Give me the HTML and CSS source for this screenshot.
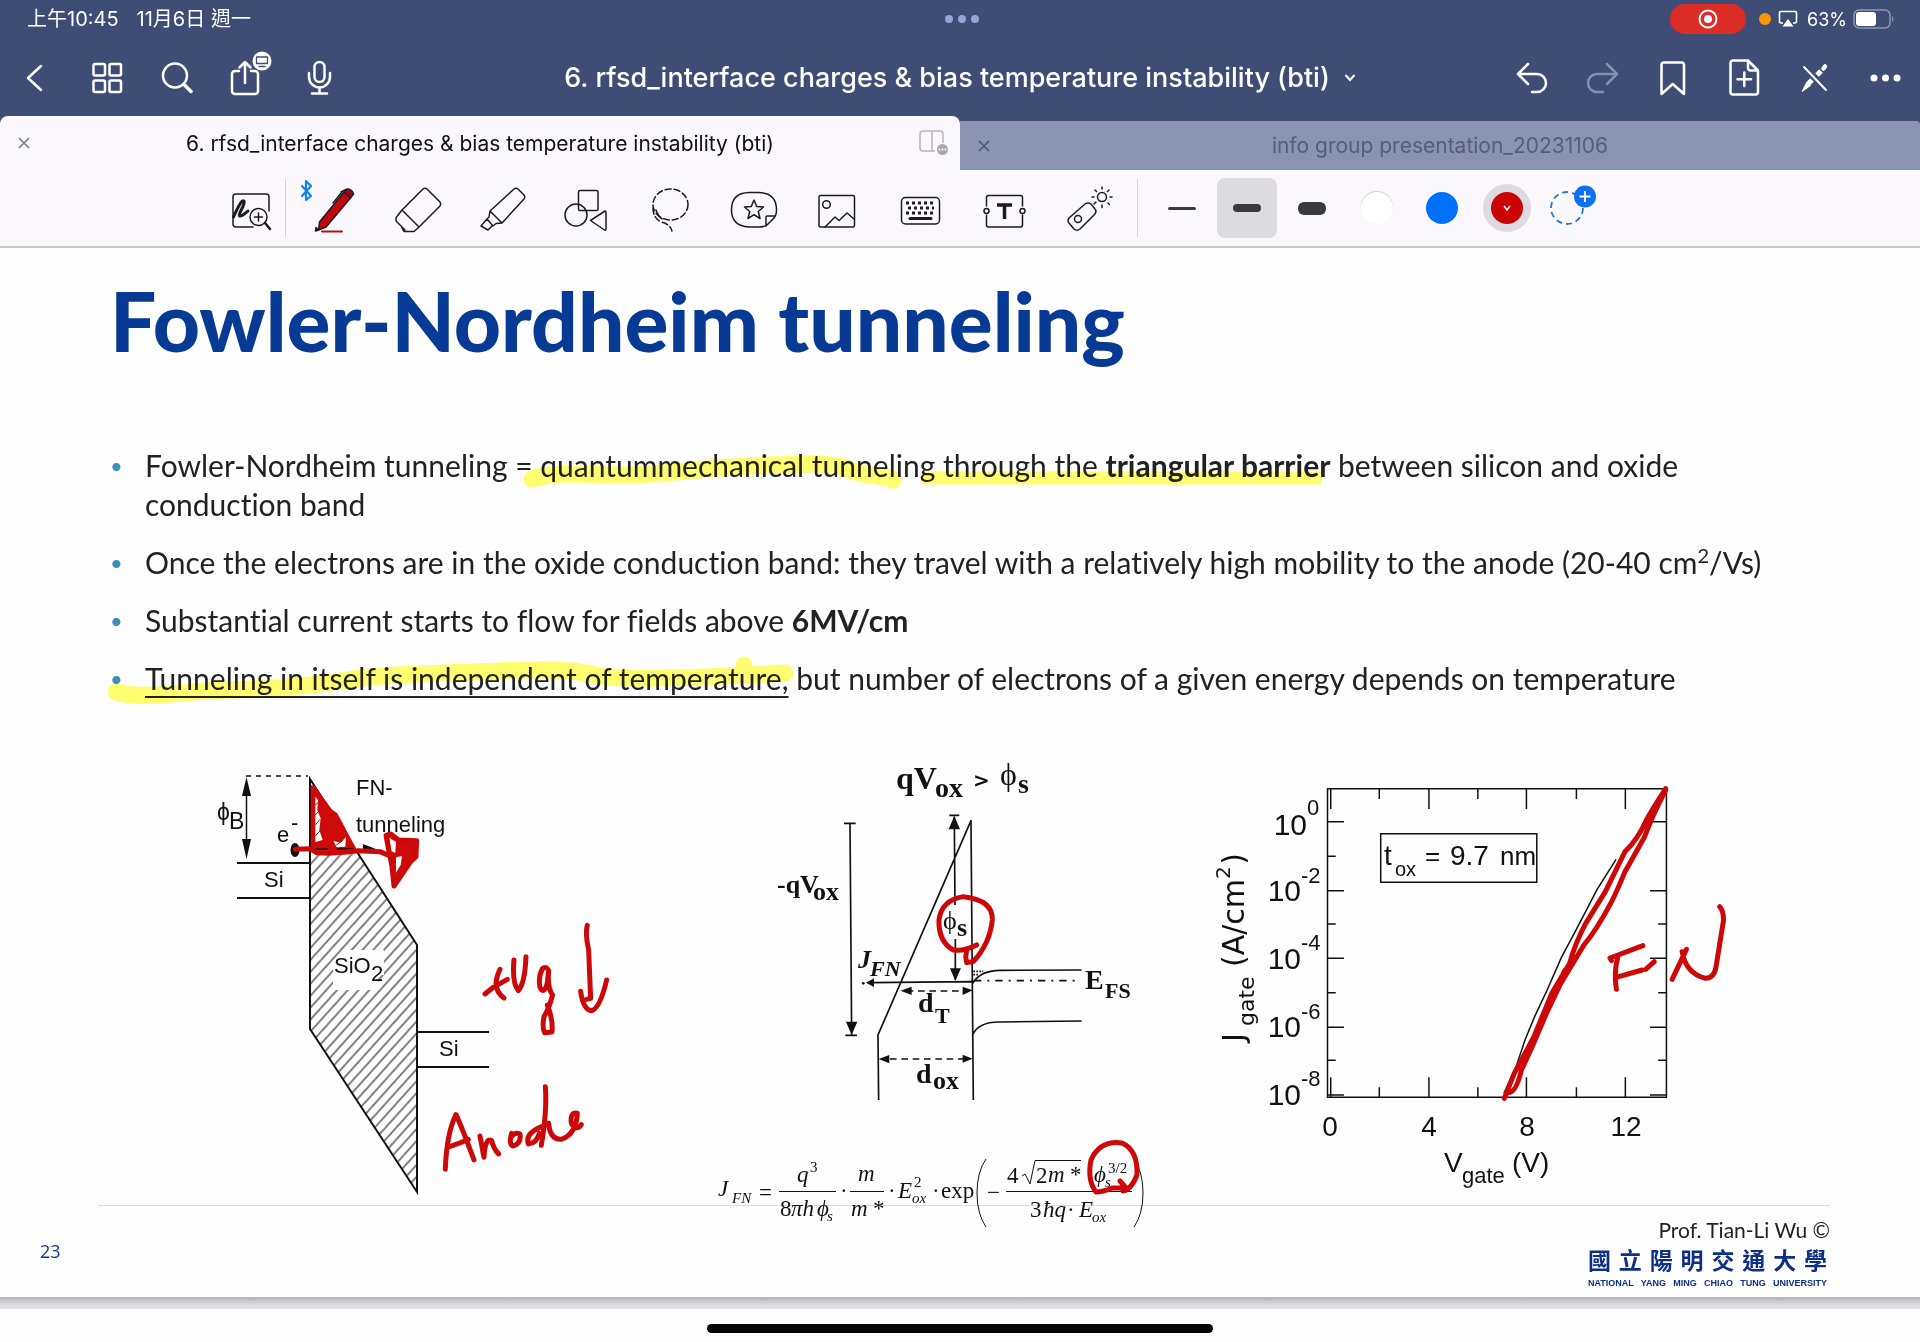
FILE: index.html
```html
<!DOCTYPE html>
<html lang="zh-Hant">
<head>
<meta charset="utf-8">
<meta name="viewport" content="width=device-width, initial-scale=1">
<title>6. rfsd_interface charges &amp; bias temperature instability (bti)</title>
<link rel="stylesheet" href="styles.css">
</head>
<body>
<header class="app-header">
  <div class="status">
    <div class="status-left"><span>上午10:45</span><span>11月6日 週一</span></div>
    <svg class="status-dots" width="36" height="10" viewBox="0 0 36 10"><circle cx="5" cy="5" r="4"/><circle cx="18" cy="5" r="4"/><circle cx="31" cy="5" r="4"/></svg>
    <div class="status-right">
      <span class="rec"><svg width="20" height="20" viewBox="0 0 20 20"><circle cx="10" cy="10" r="8.5" fill="none" stroke="#fff" stroke-width="2"/><circle cx="10" cy="10" r="4" fill="#fff"/></svg></span>
      <span class="cam"></span>
      <svg width="20" height="18" viewBox="0 0 20 18"><path d="M5 13H3a1.5 1.5 0 0 1-1.500-1.500V3A1.500 1.500 0 0 1 3 1.500H17A1.500 1.500 0 0 1 18.500 3V11.500A1.500 1.500 0 0 1 17 13H15" fill="none" stroke="#fff" stroke-width="1.600"/><path d="M10 9L15.500 16.500H4.500Z" fill="#fff"/></svg>
      <span class="pct">63%</span>
      <svg width="43" height="20" viewBox="0 0 43 20"><rect x="1" y="1" width="36" height="18" rx="5" fill="none" stroke="#8f98b6" stroke-width="1.500"/><rect x="3" y="3" width="20" height="14" rx="3" fill="#fff"/><path d="M39 7a4 4 0 0 1 0 6z" fill="#8f98b6"/></svg>
    </div>
  </div>
  <nav class="nav">
    <div class="nav-group">
      <button class="nav-btn" aria-label="Back"><svg viewBox="0 0 44 44"><path d="M27 11L14 23L27 35"/></svg></button>
      <button class="nav-btn" aria-label="Thumbnails"><svg viewBox="0 0 44 44"><rect x="8.500" y="9" width="11.500" height="11.500" rx="1.500"/><rect x="24.500" y="9" width="11.500" height="11.500" rx="1.500"/><rect x="8.500" y="25.500" width="11.500" height="11.500" rx="1.500"/><rect x="24.500" y="25.500" width="11.500" height="11.500" rx="1.500"/></svg></button>
      <button class="nav-btn" aria-label="Search"><svg viewBox="0 0 44 44"><circle cx="19" cy="20.500" r="12"/><path d="M28 29.500L35 36.500" stroke-width="3.500"/></svg></button>
      <button class="nav-btn" aria-label="Share"><svg viewBox="0 0 44 44"><path d="M12 16H8a3 3 0 0 0-3 3V36a3 3 0 0 0 3 3H28a3 3 0 0 0 3-3V19a3 3 0 0 0-3-3H24M18 28V7M12.500 12.500L18 7L23.500 12.500"/><circle cx="35" cy="6" r="9.500" fill="#fff" stroke="none"/><path d="M29.500 2H40.500V8.500H29.500ZM32 11.500H38" stroke="#3f4d76" stroke-width="1.300"/></svg></button>
      <button class="nav-btn" aria-label="Record"><svg viewBox="0 0 44 44"><rect x="16.500" y="7" width="10" height="20" rx="5"/><path d="M11 18V22a10.500 10.500 0 0 0 21 0V18M21.500 32.500V38M14 38.500H29"/></svg></button>
    </div>
    <h1 class="doc-title"><button>6. rfsd_interface charges &amp; bias temperature instability (bti)<svg width="12" height="10" viewBox="0 0 12 10"><path d="M1.500 2L6 7L10.500 2"/></svg></button></h1>
    <div class="nav-group nav-end">
      <button class="nav-btn" aria-label="Undo"><svg viewBox="0 0 44 44"><path d="M20 9L10 19L20 29M11 19H29a9 9 0 0 1 0 18H24"/></svg></button>
      <button class="nav-btn dim" aria-label="Redo"><svg viewBox="0 0 44 44"><path d="M28 9L38 19L28 29M37 19H18a9 9 0 0 0 0 18H24"/></svg></button>
      <button class="nav-btn" aria-label="Bookmark"><svg viewBox="0 0 44 44"><path d="M11.500 39V10a2.500 2.500 0 0 1 2.500-2.500H31.500A2.500 2.500 0 0 1 34 10V39L22.750 29Z"/></svg></button>
      <button class="nav-btn" aria-label="Add page"><svg viewBox="0 0 44 44"><path d="M27 5.500H12a2.500 2.500 0 0 0-2.500 2.500V37A2.500 2.500 0 0 0 12 39.500H34.500A2.500 2.500 0 0 0 37 37V15.500L27 5.500V13a2.500 2.500 0 0 0 2.500 2.500H37M23.300 17.500V31M16.500 24.200H30"/></svg></button>
      <button class="nav-btn" aria-label="Read only"><svg viewBox="0 0 44 44"><path d="M12 12L34 35" stroke-width="2"/><path d="M10.500 36L15 27.500L18 30.500Z" stroke-width="1.500" fill="#fff"/><path d="M16 29L20 25M25 20L29 16" stroke-width="5" stroke-linecap="butt"/><path d="M31.500 13.500L33 11.500" stroke-width="4.500"/></svg></button>
      <button class="nav-btn" aria-label="More"><svg viewBox="0 0 44 44"><g fill="#fff" stroke="none"><circle cx="11" cy="23" r="3.500"/><circle cx="22.500" cy="23" r="3.500"/><circle cx="34" cy="23" r="3.500"/></g></svg></button>
    </div>
  </nav>
  <div class="tabs">
    <div class="tab tab-active">
      <button class="close" aria-label="Close tab"><svg width="12" height="12" viewBox="0 0 12 12"><path d="M1 1L11 11M11 1L1 11"/></svg></button>
      <a href="#slide">6. rfsd_interface charges &amp; bias temperature instability (bti)</a>
      <button class="split" aria-label="Split view"><svg width="30" height="26" viewBox="0 0 30 26"><path d="M24 13V4a3 3 0 0 0-3-3H4a3 3 0 0 0-3 3V18a3 3 0 0 0 3 3H16M13 1V21" fill="none" stroke="#b5b4b9" stroke-width="1.500"/><circle cx="23.500" cy="19.500" r="5.500" fill="#a9a8ad"/><g fill="#fff"><circle cx="20.500" cy="19.500" r="1"/><circle cx="23.500" cy="19.500" r="1"/><circle cx="26.500" cy="19.500" r="1"/></g></svg></button>
    </div>
    <div class="tab tab-idle">
      <button class="close" aria-label="Close tab"><svg width="12" height="12" viewBox="0 0 12 12"><path d="M1 1L11 11M11 1L1 11"/></svg></button>
      <a href="#info">info group presentation_20231106</a>
      <span class="split"></span>
    </div>
  </div>
</header>

<div class="toolbar">
  <button class="tool tool-zoom" aria-label="Zoom window"><svg viewBox="0 0 48 48"><path d="M42 27V13a3 3 0 0 0-3-3H9a3 3 0 0 0-3 3V40a3 3 0 0 0 3 3H26"/><path d="M6.500 33C11 23 15 15 17 17C19 20 10 31 13 32C16 32 18 29 21 27" stroke-width="3"/><circle cx="31.500" cy="33" r="8.500"/><path d="M38 39L43 45" stroke-width="2.500"/><path d="M27.500 33H35.500M31.500 29V37"/></svg></button>
  <span class="sep"></span>
  <div class="tools">
    <button class="tool" aria-label="Pen"><svg viewBox="0 0 48 48"><path d="M-9 2L0 12L-5 16V-3L0 2L-9 12" stroke="#1583e6" stroke-width="2.200"/><path d="M33 8L39.500 14L15 43L7.500 46L8.500 38Z" fill="#c4060c"/><path d="M33 8L36 5Q41 5 42.500 10L39.500 14Z" fill="#a3060b"/><path d="M31 8L22 19M35 5.500L30 8"/><path d="M4.500 47L7.500 46L5 43.500Z" fill="#1c1c1e"/><path d="M11 47.500H31" stroke="#b5120f" stroke-width="2"/></svg></button>
    <button class="tool" aria-label="Eraser"><svg viewBox="0 0 48 48"><path d="M29 5Q31 3.500 33 5L46 18Q47.500 20 46 22L25 43L8 26ZM8 26L2.500 33Q1 36 3 38L11 46M25 43L20 47.500H10L8 44"/></svg></button>
    <button class="tool" aria-label="Highlighter"><svg viewBox="0 0 48 48"><path d="M12 27L36 5Q38 3.500 40 5L46 11Q47.500 13 46 15L24 39ZM12 27L11 33L9 35L15 42L18 39.500L24 39M9 35L3 42L10 46L14 42"/></svg></button>
    <button class="tool" aria-label="Shapes"><svg viewBox="0 0 48 48"><rect x="16.500" y="6.500" width="19.500" height="20" rx="1.500"/><circle cx="14" cy="31" r="11"/><path d="M28.500 36.500L43 27Q44 27 44 28.500V45.500Q44 46.500 42.500 46Z"/></svg></button>
    <button class="tool" aria-label="Lasso"><svg viewBox="0 0 48 48"><ellipse cx="25.500" cy="20.500" rx="17.500" ry="15.500" stroke-dasharray="6 3"/><path d="M8 24Q8 34 16 38Q25 40 27 47" stroke-dasharray="6 3"/><path d="M11 26Q13 32 17 35"/></svg></button>
    <button class="tool" aria-label="Stickers"><svg viewBox="0 0 48 48"><path d="M20 8.500H30Q47.500 9 47.500 26Q47.500 32 44 35L38 41Q35 43 30 43H20Q2.500 42 2.500 26Q2.500 9 20 8.500ZM37 42V33Q37 32 38 32H46"/><path d="M25 16L27.700 22.500L34.500 23L29.300 27.500L31 34.500L25 30.700L19 34.500L20.700 27.500L15.500 23L22.300 22.500Z"/></svg></button>
    <button class="tool" aria-label="Image"><svg viewBox="0 0 48 48"><rect x="7" y="11.500" width="35.500" height="31.500" rx="1.500"/><circle cx="14.500" cy="20.500" r="3.800"/><path d="M13 43L23 33L27 36.500L35 29L42 35"/></svg></button>
    <button class="tool" aria-label="Keyboard"><svg viewBox="0 0 48 48"><rect x="5.500" y="13.500" width="38" height="26.500" rx="4"/><path d="M10 19H40M12 24H38M10 29H40" stroke-width="3" stroke-dasharray="3 3" stroke-linecap="butt"/><path d="M14 34.500H35" stroke-width="3"/></svg></button>
    <button class="tool" aria-label="Text"><svg viewBox="0 0 48 48"><path d="M6.500 22V13.500Q6.500 11.500 8.500 11.500H40.500Q42.500 11.500 42.500 13.500V22M6.500 31V41Q6.500 43 8.500 43H40.500Q42.500 43 42.500 41V31"/><circle cx="6.500" cy="27" r="2.500"/><circle cx="42.500" cy="27" r="2.500"/><path d="M17 21H32M24.500 21V35" stroke-width="3.500" stroke-linecap="butt"/></svg></button>
    <button class="tool" aria-label="Laser pointer"><svg viewBox="0 0 48 48"><path d="M22 20Q25 18 28 20L32 25Q34 27 32 30L17 45Q14 47.500 11 45L6 39Q4 37 6 34Z"/><circle cx="15" cy="35" r="3.500"/><circle cx="39" cy="13" r="4.500"/><path d="M39 3V5M39 21V23.500M29 13H31M47 13H49M32 6L33.500 7.500M45 19L46.500 20.500M46 6L44.500 7.500M33 18L31 20"/></svg></button>
  </div>
  <span class="sep"></span>
  <div class="styles">
    <button class="pick" aria-label="Thin stroke"><span class="dash dash-s"></span></button>
    <button class="pick pick-on" aria-label="Medium stroke"><span class="dash dash-m"></span></button>
    <button class="pick" aria-label="Thick stroke"><span class="dash dash-l"></span></button>
    <button class="pick" aria-label="White"><span class="ink ink-white"></span></button>
    <button class="pick" aria-label="Blue"><span class="ink ink-blue"></span></button>
    <button class="pick" aria-label="Red"><span class="ink ink-red"><svg width="10" height="8" viewBox="0 0 10 8"><path d="M2 2L5 6L8 2" fill="none" stroke="#fff" stroke-width="1.600"/></svg></span></button>
    <button class="pick" aria-label="Add colour"><svg width="60" height="60" viewBox="0 0 60 60"><circle cx="25" cy="30" r="16" fill="none" stroke="#2478d8" stroke-width="1.800" stroke-dasharray="6 4"/><circle cx="43" cy="18.500" r="11" fill="#0d6ff2"/><path d="M43 13V24M37.500 18.500H48.500" stroke="#fff" stroke-width="1.800"/></svg></button>
  </div>
</div>

<main class="slide" id="slide">
  <h2 class="slide-title">Fowler-Nordheim tunneling</h2>
  <div class="points">
    <ul>
      <li><p>Fowler-Nordheim tunneling = quantummechanical tunneling through the <b>triangular barrier</b> between silicon and oxide conduction band</p></li>
      <li><p>Once the electrons are in the oxide conduction band: they travel with a relatively high mobility to the anode (20-40 cm<sup>2</sup>/Vs)</p></li>
      <li><p>Substantial current starts to flow for fields above <b>6MV/cm</b></p></li>
      <li><p><u>Tunneling in itself is independent of temperature,</u> but number of electrons of a given energy depends on temperature</p></li>
    </ul>
    <svg class="marker" viewBox="0 448 1920 252">
      <path d="M532 481C560 472 590 478 630 477S720 468 770 467S830 464 850 472S890 477 893 482"/>
      <path d="M922 480H1322" stroke-width="13" stroke-linecap="butt"/>
      <path d="M116 694C140 701 170 695 210 693S300 690 340 683S430 676 500 673S580 674 600 678S700 680 785 675M744 676V667"/>
    </svg>
  </div>

  <div class="figures">
    <svg class="fig" viewBox="200 750 440 490" role="img" aria-label="Band diagram with FN tunneling">
      <defs>
        <pattern id="hatch" width="8" height="8" patternUnits="userSpaceOnUse" patternTransform="rotate(42)"><path d="M1 0V8" stroke="#1a1a1a" stroke-width="1.100"/></pattern>
      </defs>
      <path d="M310 853H358L417 945V1192L310 1029Z" fill="url(#hatch)"/>
      <path d="M345 950H384V975H378V990H333V962Z" fill="#fefefe"/>
      <path class="ln2" d="M310 779L417 945V1192L310 1029ZM237 863H310M237 898H310M417 1032H489M417 1067H489"/>
      <path class="ln" d="M246 776H308" stroke-dasharray="5 5"/>
      <path class="ln" d="M246.500 790V845"/>
      <path d="M246.500 777L251 796H242ZM246.500 859L251 839H242ZM363 844L376 849L363 852Z"/>
      <ellipse cx="295" cy="850" rx="4.500" ry="7"/>
      <g class="sans t22">
        <g class="t23"><text x="217" y="820">ϕ</text><text x="229" y="829">B</text></g>
        <text x="277" y="842">e</text><text x="291" y="830">-</text>
        <text x="356" y="795">FN-</text><text x="356" y="832">tunneling</text>
        <text x="264" y="887">Si</text><text x="439" y="1056">Si</text>
        <text x="334" y="973">SiO</text><text x="371" y="981">2</text>
      </g>
      <g transform="translate(200 750) scale(.3333)">
        <path d="M332 105L345 108L395 178L412 190L468 295L440 312L385 315L332 302Z" fill="#cf0a0a"/>
        <path d="M346 140L354 150L352 180L362 205L358 240L368 270L346 276ZM400 272L420 278L438 262L436 290L410 292Z" fill="#fefefe"/>
        <path d="M346 165L354 158M346 195L358 182M346 225L360 208M346 258L362 240M408 286L430 270" stroke="#333" stroke-width="3"/>
        <path d="M345 297H385M410 297H460" stroke="#111" stroke-width="4"/>
        <path d="M560 258L592 268L652 272L648 322L632 335L582 410L576 325Z" fill="#cf0a0a"/>
        <path d="M568 264L588 275L586 308L574 304ZM588 322L606 318L602 345L588 368Z" fill="#fefefe"/>
        <g class="pen">
          <path d="M286 298L330 296L350 308L385 310L440 306L475 302L540 305L570 318L576 350L582 408L632 335L648 320L650 272L596 270L572 252L558 256L568 310"/>
          <path d="M855 732L880 712L922 688M900 658Q872 715 912 744M942 630Q936 700 955 722Q975 700 978 620"/>
          <path d="M1046 662Q1040 648 1028 655Q1014 680 1020 712Q1032 735 1042 700L1046 662Q1042 715 1058 735Q1048 775 1032 800Q1026 835 1034 848L1056 846Q1060 810 1042 765"/>
          <path d="M1162 526Q1155 550 1166 600L1172 745L1160 748M1142 724Q1150 780 1175 782Q1200 775 1220 690"/>
          <path d="M736 1258Q740 1150 768 1094Q785 1130 822 1230M742 1192Q780 1180 805 1168M840 1158L852 1222Q856 1160 875 1172Q880 1195 896 1212M935 1150Q925 1185 940 1188Q965 1180 960 1152Q945 1145 935 1160"/>
          <path d="M1025 1130Q975 1150 985 1182Q1010 1180 1018 1150M1036 1010Q1042 1080 1024 1186M1046 1120Q1050 1170 1085 1168Q1130 1150 1132 1090Q1110 1085 1114 1120Q1130 1145 1144 1124"/>
        </g>
      </g>
    </svg>

    <svg class="fig" viewBox="640 750 540 490" role="img" aria-label="Barrier diagram and FN current density formula">
      <g transform="translate(700 750) scale(.3333)">
        <g class="ln">
          <path d="M432 220H467M450 220L455 855M436 856H471M748 196H778M763 200L765 465M766 567V690M813 210L820 1050M813 212L534 855L536 1050M510 698L820 695M818 700Q840 662 900 661L1145 660M818 855Q835 815 900 816L1145 813"/>
          <path d="M620 723H790M570 927H800" stroke-dasharray="20 14"/>
          <path d="M822 692H1140" stroke-dasharray="22 18 6 18"/>
          <path d="M820 664H850M820 674H835" stroke-dasharray="5 4"/>
        </g>
        <path d="M763 198L780 238H746ZM766 692L783 655H750ZM455 855L472 815H438ZM498 698L522 685V711ZM602 722L635 710V735ZM818 721L788 710V735ZM536 927L568 915V940ZM818 926L788 914V938Z"/>
        <circle cx="490" cy="700" r="4"/>
      </g>
      <g class="serif bold">
        <text class="t32" x="896" y="789">qV</text><text class="t28" x="935" y="797">ox</text><text class="t28" x="1018" y="793">s</text>
        <text class="wide t20" x="973" y="787">&gt;</text>
        <text class="t26" x="777" y="893">-qV</text><text class="t26" x="813" y="900">ox</text>
        <text class="t26" x="957" y="936">s</text>
        <text class="t28" x="1085" y="989">E</text><text class="t22" x="1105" y="998">FS</text>
        <text class="t28" x="918" y="1012">d</text><text class="t22" x="935" y="1023">T</text>
        <text class="t28" x="916" y="1083">d</text><text class="t26" x="933" y="1089">ox</text>
        <g class="ital"><text class="t26" x="858" y="968">J</text><text class="t22" x="870" y="976">FN</text></g>
      </g>
      <g class="serif"><text class="t32" x="1000" y="785">ϕ</text><text class="t26" x="943" y="929">ϕ</text></g>
      <g class="serif t23">
        <g class="ital">
          <text x="718" y="1196">J</text><text x="797" y="1182">q</text><text x="791" y="1216">πh</text><text x="817" y="1216">ϕ</text>
          <text x="858" y="1181">m</text><text x="851" y="1216">m</text><text x="898" y="1198">E</text><text x="1048" y="1182">m</text><text x="1043" y="1217">ħq</text><text x="1079" y="1217">E</text><text x="1094" y="1182">ϕ</text>
          <g class="t15"><text x="732" y="1203">FN</text><text x="827" y="1221">s</text><text x="912" y="1203">ox</text><text x="1092" y="1222">ox</text><text x="1105" y="1187">s</text></g>
        </g>
        <text x="759" y="1200">=</text><text x="780" y="1216">8</text><text x="840" y="1198">·</text><text x="873" y="1216">*</text><text x="888" y="1198">·</text><text x="932" y="1198">·</text><text x="941" y="1198">exp</text>
        <text x="987" y="1200">−</text><text x="1007" y="1183">4</text><text x="1036" y="1183">2</text><text x="1070" y="1182">*</text><text x="1030" y="1217">3</text><text x="1067" y="1217">·</text>
        <g class="t15"><text x="810" y="1172">3</text><text x="914" y="1187">2</text><text x="1108" y="1173">3/2</text></g>
      </g>
      <path class="rule" d="M779 1191.500H836M850 1191.500H884M1006 1191.500H1132M1022 1176L1025 1174L1030 1184L1035 1160.500H1081M986 1159Q977 1172 977 1193T986 1227M1134 1159Q1143 1172 1143 1193T1134 1227"/>
      <g class="pen">
        <path transform="translate(700 750) scale(.3333)" d="M830 585Q790 605 760 600Q715 575 717 510Q725 450 790 440Q880 450 877 510Q870 580 820 635L800 638Q795 620 800 602"/>
        <path d="M1120 1181L1126 1188L1112 1188Q1103 1192 1096 1192Q1087 1180 1091 1160Q1100 1140 1122 1143Q1138 1150 1137 1175Q1131 1190 1123 1191"/>
      </g>
    </svg>

    <svg class="fig" viewBox="1180 750 580 490" role="img" aria-label="Gate current density against gate voltage">
      <g class="thin" transform="translate(1200 760) scale(.35714 .33333)">
        <path d="M357 86H1306V1012H357ZM366 86V147M366 1012V952M641 86V147M641 1012V952M914 86V147M914 1012V952M1191 86V147M1191 1012V952M502 86V117M502 1012V982M778 86V117M778 1012V982M1054 86V117M1054 1012V982"/>
        <path d="M357 185H403M357 392H403M357 595H403M357 802H403M357 1005H403M1306 185H1260M1306 392H1260M1306 595H1260M1306 802H1260M1306 1005H1260M357 289H380M357 492H380M357 698H380M357 901H380M1306 492H1283M1306 698H1283M1306 901H1283M506 221H943V367H506Z"/>
        <path d="M851 1000L885 920L910 840L937 770L972 690L1012 592L1052 512L1112 388L1165 298"/>
      </g>
      <g class="sans t26">
        <text class="t28" x="1384" y="865">t</text><text class="t20" x="1395" y="876">ox</text><text x="1425" y="865">=</text><text class="t28" x="1450" y="865">9.7</text><text x="1500" y="865">nm</text>
      </g>
      <g class="sans t28">
        <g class="end t30"><text x="1307" y="835">10</text><text x="1301" y="901">10</text><text x="1301" y="969">10</text><text x="1301" y="1037">10</text><text x="1301" y="1105">10</text></g>
        <g class="t22"><text x="1307" y="815">0</text><text x="1301" y="883">-2</text><text x="1301" y="950">-4</text><text x="1301" y="1019">-6</text><text x="1301" y="1086">-8</text></g>
        <g class="mid"><text x="1330" y="1136">0</text><text x="1429" y="1136">4</text><text x="1527" y="1136">8</text><text x="1626" y="1136">12</text></g>
        <text x="1444" y="1172">V</text><text class="t22" x="1462" y="1183">gate</text><text x="1512" y="1172">(V)</text>
      </g>
      <g class="wide t30" transform="translate(1244 1042) rotate(-90)">
        <text x="0" y="0">J</text><text class="t22" x="16" y="10">gate</text><text x="75" y="0">(A/cm</text><text class="t20" x="163" y="-14">2</text><text x="189" y="0" class="end">)</text>
      </g>
      <g class="pen" transform="translate(1200 760) scale(.35714 .33333)">
        <path d="M1304 86Q1265 150 1250 180Q1225 240 1190 275Q1165 330 1135 395L1080 490Q1050 550 1035 610L985 700L935 830L880 940L852 1015M1304 90Q1265 170 1245 230L1190 335Q1165 400 1150 430Q1110 510 1075 555L1010 670L970 760L930 860L900 930Q885 1000 862 998M1022 630L985 710M930 850L900 910"/>
        <path d="M1152 602L1148 594L1240 557M1170 590Q1158 640 1166 688M1165 652L1238 630M1248 628L1272 605M1322 658L1362 568M1350 575Q1360 640 1415 655Q1440 655 1445 620L1466 480Q1465 450 1455 440"/>
      </g>
    </svg>
  </div>

  <footer class="slide-foot">
    <span class="page-no">23</span>
    <div class="credit">
      <p class="author">Prof. Tian-Li Wu ©</p>
      <p class="uni">國立陽明交通大學</p>
      <p class="uni-en">NATIONAL YANG MING CHIAO TUNG UNIVERSITY</p>
    </div>
  </footer>
</main>
<div class="home"><span></span></div>
</body>
</html>
```
FILE: styles.css
```css
* { box-sizing: border-box; }
body { margin: 0; background: #fdfdfd; color: #222; font-family: Inter, "Noto Sans CJK TC", sans-serif; }
h1, h2, p, ul { margin: 0; padding: 0; }
button { border: 0; padding: 0; background: none; font: inherit; color: inherit; }
a { color: inherit; text-decoration: none; }
svg { display: block; overflow: visible; flex: none; }

/* header */
.app-header { background: #3f4d76; color: #fff; }
.status { display: grid; grid-template-columns: 1fr auto 1fr; align-items: center; height: 38px; padding: 0 24px 0 27px; font-size: 18px; }
.status-left { display: flex; gap: 18px; font-size: 20px; line-height: 24px; }
.status-dots { fill: #93a5d8; }
.status-right { display: flex; justify-content: flex-end; align-items: center; gap: 6px; }
.rec { display: grid; place-items: center; width: 76px; height: 30px; border-radius: 15px; background: #dc2c26; margin-right: 7px; }
.cam { width: 12px; height: 12px; border-radius: 50%; background: #ff9500; margin-right: 1px; }
.pct { margin-left: 3px; }
.nav { display: grid; grid-template-columns: 1fr auto 1fr; align-items: center; height: 78px; }
.nav-group { display: flex; }
.nav-end { justify-content: flex-end; }
.nav-btn { width: 71px; height: 44px; display: grid; place-items: center; }
.nav-btn svg { width: 44px; height: 44px; fill: none; stroke: #fff; stroke-width: 2.5px; stroke-linecap: round; stroke-linejoin: round; }
.dim svg { stroke: #8490b5; }
.doc-title { padding-top: 2px; font-size: 27px; font-weight: 500; line-height: 32px; }
.doc-title button { display: flex; align-items: center; gap: 14px; }
.doc-title svg { fill: none; stroke: #fff; stroke-width: 2px; }
.tabs { display: grid; grid-template-columns: 1fr 1fr; align-items: end; }
.tab { display: grid; grid-template-columns: 48px 1fr 48px; align-items: center; text-align: center; font-size: 21px; }
.tab-active { height: 54px; background: #faf8fd; color: #111; border-radius: 8px 8px 0 0; }
.tab-idle { height: 49px; background: #8b93b2; color: #565d79; border-radius: 0 4px 0 0; }
.close { display: grid; place-items: center; height: 40px; }
.close svg { fill: none; stroke: #77767c; stroke-width: 1.5px; }
.tab-idle .close svg { stroke: #4c5470; }
.split { justify-self: center; }
.tab-active .split { margin-right: 4px; }

/* toolbar */
.toolbar { display: flex; align-items: center; height: 78px; padding-left: 217px; background: #faf8fd; border-bottom: 2px solid #cbcace; }
.sep { width: 1px; height: 58px; background: #d3d2d8; }
.tools { display: grid; grid-template-columns: repeat(10, 1fr); width: 836px; margin: 0 8px 0 7px; }
.tool { display: grid; place-items: center; }
.tool-zoom { width: 68px; }
.tool svg { width: 48px; height: 48px; fill: none; stroke: #1c1c1e; stroke-width: 1.5px; stroke-linecap: round; stroke-linejoin: round; }
.styles { display: flex; gap: 5px; margin-left: 14px; }
.pick { display: grid; place-items: center; width: 60px; height: 60px; border-radius: 8px; }
.pick-on { background: #dcdbe0; }
.dash { width: 28px; border-radius: 6px; background: #3a393d; }
.dash-s { height: 3px; }
.dash-m { height: 8px; }
.dash-l { height: 13px; }
.ink { display: grid; place-items: center; width: 32px; height: 32px; border-radius: 50%; }
.ink-white { background: #fff; box-shadow: 0 -1px 1px #cfced3; }
.ink-blue { background: #0071ff; }
.ink-red { background: #cc0303; box-shadow: 0 0 0 8px #dddbdf; }

/* slide */
.slide { background: #fefefe; padding-top: 24px; font-family: Lato, sans-serif; font-variant-ligatures: none; }
.slide-title { padding-left: 110px; font-size: 82px; line-height: 96px; font-weight: 900; color: #063a94; }
.points { position: relative; margin-top: 78px; padding: 0 130px 0 110px; }
.points ul { list-style: none; display: grid; gap: 19px; }
.points li { display: grid; grid-template-columns: 35px 1fr; font-size: 30px; line-height: 39px; }
.points li::before { content: "•"; font-size: 22px; color: #3a8fb5; }
.points sup { font-size: 20px; line-height: 0; }
.points u { text-decoration-thickness: 2px; text-underline-offset: 6px; text-decoration-skip-ink: none; }
.marker { position: absolute; left: 0; top: 0; width: 100%; fill: none; stroke: #ffff70; stroke-width: 17px; stroke-linecap: round; mix-blend-mode: multiply; }
.figures { display: grid; grid-template-columns: 44fr 54fr 58fr; align-items: start; padding: 0 160px 0 200px; margin: 52px 0 -35px; }
.fig { width: 100%; color: #111; fill: #111; }
.ln, .ln2, .thin { fill: none; stroke: #111; stroke-width: 1.5px; }
.ln2 { stroke-width: 2px; }
g.ln { stroke-width: 5px; }
.rule { fill: none; stroke: #111; stroke-width: 1px; }
.thin path { vector-effect: non-scaling-stroke; }
.pen path { fill: none; stroke: #cc0808; stroke-width: 5px; stroke-linecap: round; stroke-linejoin: round; vector-effect: non-scaling-stroke; }
.sans { font-family: "Liberation Sans", sans-serif; }
.serif { font-family: "Liberation Serif", "DejaVu Serif", serif; }
.wide { font-family: "DejaVu Sans", sans-serif; }
.bold { font-weight: 700; }
.ital { font-style: italic; }
.end { text-anchor: end; }
.mid { text-anchor: middle; }
.t15 { font-size: 15px; }
.t20 { font-size: 20px; }
.t22 { font-size: 22px; }
.t23 { font-size: 23px; }
.t26 { font-size: 26px; }
.t28 { font-size: 28px; }
.t30 { font-size: 30px; }
.t32 { font-size: 32px; }
.slide-foot { display: flex; justify-content: space-between; margin: 0 90px 0 98px; padding: 11px 0 7px; border-top: 1px solid #dcdcde; }
.page-no { margin: 22px 0 0 -58px; font-family: "Open Sans", sans-serif; font-size: 18px; line-height: 24px; color: #123a8c; }
.credit { width: 242px; color: #0d2f86; }
.author { text-align: right; font-size: 21px; line-height: 25px; color: #222; }
.uni { margin-right: 3px; font-family: "Noto Sans CJK TC", sans-serif; font-weight: 700; font-size: 23px; line-height: 35px; text-align: justify; text-align-last: justify; }
.uni-en { margin-right: 3px; font-family: "Liberation Sans", sans-serif; font-weight: 700; font-size: 9px; line-height: 13px; text-align-last: justify; white-space: nowrap; }
.home { height: 47px; padding-top: 27px; background: linear-gradient(#b3b2b6 0, #dddce0 8px, #e0dfe3 12px, #fdfdfd 12px); }
.home span { display: block; width: 506px; height: 9px; margin: 0 auto; border-radius: 5px; background: #000; }
```
